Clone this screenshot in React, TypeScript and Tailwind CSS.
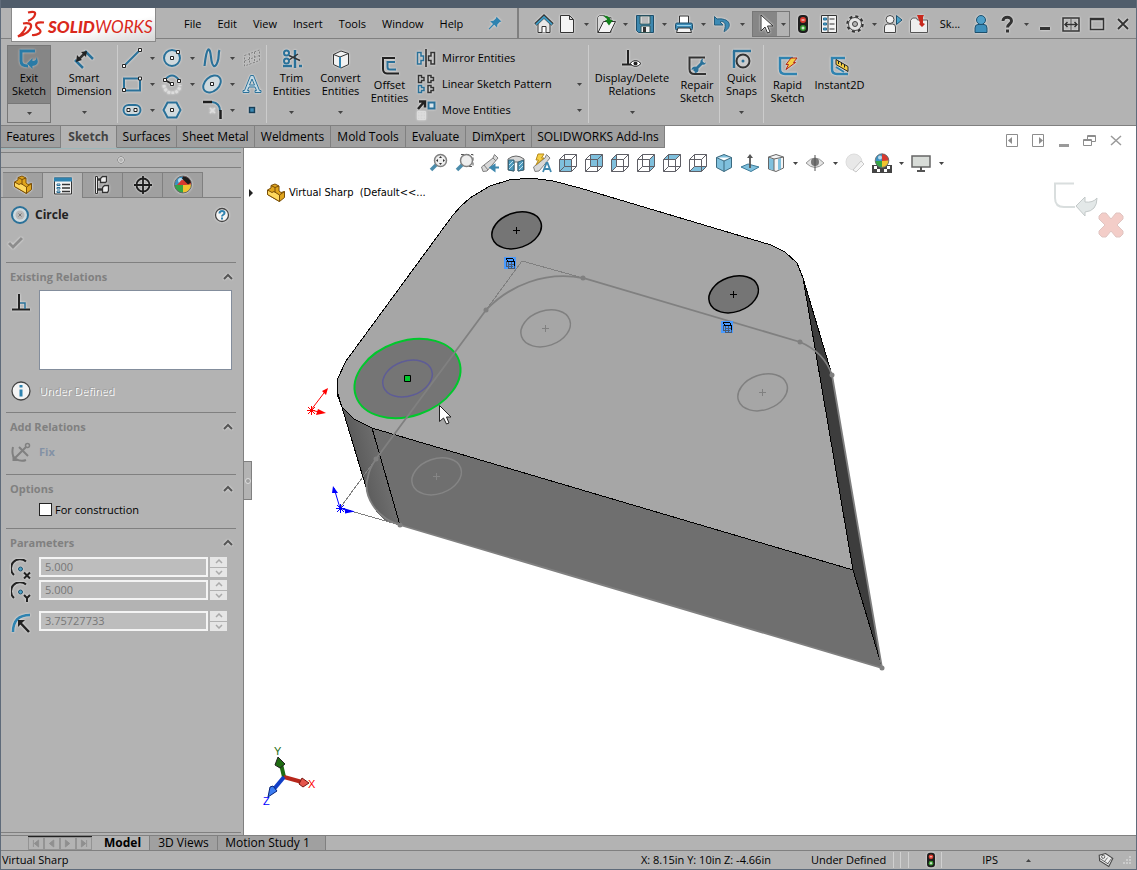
import React, { useState } from "react";
import clsx from "clsx";

const BLUE = "#2a7199";
const DARK = "#333333";

const cube = (face: string) => (
  <>
    <path d={face} fill="#7fc0dd" stroke="none" />
    <path d="M1.5 6.5h12v12h-12zM6.5 1.5h12v12h-12zM1.5 6.5l5-5M13.5 6.5l5-5M13.5 18.5l5-5M1.5 18.5l5-5" stroke="#5f5f66" />
  </>
);

const part = (
  <g stroke="#7a4f08" strokeWidth="1" strokeLinejoin="round">
    <path d="M1.500 7L5 5V2.500L9 1l4 2v5l2 1.500 3.500-1v6l-5 4-12-7z" fill="#e0a51c" />
    <path d="M1.500 7l4.500 2.500 2-1 5.500 3.500v6.500l-12-7z" fill="#ffd95e" />
    <path d="M5 2.500l4 2v5M9 4.500L13 3M13.500 12l5-3.500" fill="none" />
  </g>
);

const sphere = (
  <>
    <circle cx="10" cy="9.500" r="8.500" fill="#3b93c4" />
    <path d="M10 1a8.500 8.500 0 0 1 8.500 8.500L10 11z" fill="#d8392f" />
    <path d="M10 10l8.500-.5A8.500 8.500 0 0 1 10 18z" fill="#f0c430" />
    <path d="M1.500 10L10 10v8a8.500 8.500 0 0 1-8.500-8z" fill="#35a546" />
    <circle cx="7.500" cy="5.500" r="2.500" fill="#ffffff" opacity=".65" />
    <circle cx="10" cy="9.500" r="8.500" stroke="#666" />
  </>
);

const magnifier = (
  <>
    <path d="M8.500 11.500L3 17" stroke="#4c8cab" strokeWidth="3.500" />
    <circle cx="12.500" cy="7.500" r="6" fill="#eeeeee" stroke="#808080" strokeWidth="1.500" />
  </>
);

const icons: Record<string, React.ReactNode> = {
  home: (
    <>
      <path d="M4 9.500V18.500h12V9.500L10 4z" fill="#e8e8e8" stroke={DARK} />
      <path d="M1.500 10.500L10 2.500l8.500 8" stroke={DARK} strokeWidth="3.500" />
      <path d="M2 10.500L10 3l8 7.500" stroke="#3f9bc4" strokeWidth="1.800" />
      <path d="M8 18.500v-6h4v6" fill="#fff" stroke={DARK} />
    </>
  ),
  page: <path d="M3.500 1.500h9l4 4v13h-13zM12.500 1.500v4h4" fill="#f4f4f4" stroke={DARK} />,
  open: (
    <>
      <path d="M1.500 3.500l2-2h5l1 2H15v15H1.500z" fill="#d9d9d9" stroke="#666" />
      <path d="M2 18.500L7.500 7.500h12L14 18.500z" fill="#f4f4f4" stroke={DARK} />
      <path d="M7 2c4-1 7 1 7.500 4H17l-4 5.500L9 6h2c0-2-1.500-3-4-4z" fill="#12801a" />
    </>
  ),
  save: (
    <>
      <path d="M1.500 1.500h17v17h-15l-2-2z" fill="#3d87ae" stroke="#1d4f6c" />
      <path d="M5 2h10v8H5zM6 12h9v6.500H6z" fill="#efefef" stroke="#355" />
      <path d="M6.500 4h7M6.500 6h7M6.500 8h7" stroke="#888" />
      <path d="M8 13h3v5H8z" fill={DARK} />
    </>
  ),
  print: (
    <>
      <path d="M5.500 2h9v8h-9z" fill="#fff" stroke={DARK} />
      <rect x="1.500" y="9" width="17" height="7" rx="1.500" fill="#3d8bb5" stroke="#1d4f6c" />
      <path d="M4 14h12l1.500 4.500h-15z" fill="#f4f4f4" stroke={DARK} />
      <path d="M3 11.500h14" stroke="#9cd2ea" />
    </>
  ),
  undo: (
    <path d="M1.500 2.500v8.500h8.500L7 8c4-1.500 7 1.500 4 9.500 8-3 8-14-7-12.500z" fill="#3d8bb5" stroke="#245d7d" />
  ),
  select: <path d="M6 1v16l4-4 2.500 6 2.500-1-2.500-6H18z" fill="#fff" stroke={DARK} />,
  traffic: (
    <>
      <rect x="5" y="1" width="10" height="18" rx="4" fill="#1d1d1d" />
      <circle cx="10" cy="6" r="3" fill="#d93a2e" />
      <circle cx="10" cy="14" r="3" fill="#36962e" />
      <path d="M8.500 6h3M8.500 14h3M10 12.500v3" stroke="#fff" />
    </>
  ),
  options: (
    <>
      <path d="M2.500 1.500h15v17h-15z" fill="#f4f4f4" stroke={DARK} />
      <path d="M4.500 4h3v2h-3zM4.500 9h3v2h-3zM4.500 14h3v2h-3z" fill="#4da3c8" stroke={BLUE} />
      <path d="M10.500 5h5M10.500 10h5M10.500 15h5M9 2v16" stroke={DARK} />
    </>
  ),
  gear: (
    <>
      <circle cx="10" cy="10" r="7.500" stroke={DARK} strokeWidth="2.500" strokeDasharray="3 2.900" />
      <circle cx="10" cy="10" r="6.500" fill="#e6e6e6" stroke="#444" />
      <circle cx="10" cy="10" r="2.500" fill="#b3b3b3" stroke="#444" />
    </>
  ),
  share: (
    <>
      <path d="M1.500 18.500V13q0-3 3-3h5q3 0 3 3v5.500z" fill="#f2f2f2" stroke="#444" />
      <circle cx="7" cy="5.500" r="4" fill="#f2f2f2" stroke="#444" />
      <path d="M13.500 1.500v9l5.500-4.500z" fill="#4da3c8" stroke="#1d4f6c" />
    </>
  ),
  bag: (
    <>
      <path d="M1.500 6.500l2-2.500h4l1 2h10v12.500h-17z" fill="#eeeeee" stroke="#555" />
      <path d="M8 1h7l-1 2v6l2 1-3 3-3-3 1-1z" fill="#c8281c" />
    </>
  ),
  user: (
    <>
      <path d="M4 18.500V14q0-3.500 3-3.500h6q3 0 3 3.500v4.500z" fill="#3f8fba" stroke="#1d4f6c" />
      <circle cx="10" cy="6" r="4.500" fill="#4f9fc8" stroke="#1d4f6c" />
    </>
  ),
  help: <path d="M6 7c0-5 8.500-5 8.500 0 0 3-4 3-4 6.500M10.500 15.500v3" stroke={DARK} strokeWidth="3" />,
  minimize: <path d="M5 14.500h10" stroke={DARK} strokeWidth="3" />,
  span: (
    <>
      <path d="M2 4h16v13H2z" stroke={DARK} strokeWidth="1.500" />
      <path d="M10 4v13" stroke="#555" />
      <path d="M4 10.500h12M6.500 8L4 10.500 6.500 13M13.500 8l2.500 2.500-2.500 2.500" stroke={DARK} strokeWidth="1.500" />
    </>
  ),
  maximize: <path d="M3.500 4.500h13v11h-13zM3 5.500h14" stroke={DARK} strokeWidth="1.500" />,
  close: <path d="M5 5l10 10M15 5L5 15" stroke={DARK} strokeWidth="1.800" />,
  pin: <path d="M12 1l6 6-2 .5-3 3-.5 4-3.500-3.500L3 17l-1-1 5.500-6L4 6.500 8 6l3-3z" fill="#2f83b0" />,

  exit: (
    <>
      <path d="M16 2H2v10q0 5 7 5" stroke="#2a7ba6" strokeWidth="3" />
      <path d="M8 14.500L13.500 9v3q4 0 4-4 4 8-4 9v3z" fill="#2a7ba6" />
    </>
  ),
  dimension: (
    <>
      <path d="M1 11l8 8M11 2l8 8" stroke="#2a7199" strokeWidth="2.500" />
      <path d="M5 10l6-6" stroke={DARK} strokeWidth="2.500" />
      <path d="M2 13l1-7 5 5zM13 2L7 3l5 5z" fill="#222" />
    </>
  ),
  line: (
    <>
      <path d="M2 18L18 2" stroke={BLUE} strokeWidth="2" />
      <path d="M.5 16.500h3v3h-3zM16.500.5h3v3h-3z" fill="#fff" stroke="#222" />
    </>
  ),
  circle: (
    <>
      <circle cx="10" cy="10" r="8" fill="#d0dade" stroke={BLUE} strokeWidth="2" />
      <path d="M8.500 8.500h3v3h-3zM14.500 2.500h3v3h-3z" fill="#fff" stroke="#222" />
    </>
  ),
  spline: <path d="M2.500 18C5-4 8-1 9 9s4 12 6.500 5C17.500 9 16 5 17.500 2" stroke={BLUE} strokeWidth="2.200" />,
  plane: (
    <path d="M2.500 7.500L17.500 2v10.500L2.500 18zM2.500 13l15-5.500M7.500 5.500v11M12.500 4v11" stroke="#808080" strokeDasharray="2 1.500" />
  ),
  rect: (
    <>
      <path d="M2 4.500h16v12H2z" stroke={BLUE} strokeWidth="2" />
      <path d="M.5 14.500h3v3h-3zM16.500 3h3v3h-3z" fill="#fff" stroke="#222" />
    </>
  ),
  arc: (
    <>
      <path d="M3 6q7-9 14 0" stroke={BLUE} strokeWidth="2" />
      <path d="M3 6l7 4" stroke="#222" strokeWidth="2" />
      <path d="M2 11a8 8 0 0 0 16 0" stroke="#ddd" strokeWidth="3" strokeDasharray="2.500 1.500" />
      <path d="M1.500 4.500h3v3h-3zM15.500 5.500h3v3h-3zM8.500 8.500h3v3h-3z" fill="#fff" stroke="#222" />
    </>
  ),
  ellipse: (
    <>
      <ellipse cx="10" cy="10" rx="10" ry="7" transform="rotate(-42 10 10)" fill="#d0dade" stroke={BLUE} strokeWidth="2" />
      <path d="M8.500 8.500h3v3h-3z" fill="#fff" stroke="#222" />
    </>
  ),
  text: <path d="M1 18.500h6v-2H5.500L7 13h6l1.500 3.500H13v2h6v-2h-1.500L11.500 1.500h-3L2.500 16.500H1zM10 5l2.500 6h-5z" fill="#c5dae5" stroke={BLUE} />,
  slot: (
    <>
      <rect x="1.500" y="5" width="17" height="10" rx="5" fill="#d0dade" stroke={BLUE} strokeWidth="2" />
      <path d="M5 8.500h3v3H5zM12 8.500h3v3h-3z" fill="#fff" stroke="#222" />
    </>
  ),
  polygon: (
    <>
      <path d="M1.500 10L5.500 2.500h9l4 7.500-4 7.500h-9z" fill="#d0dade" stroke={BLUE} strokeWidth="2" />
      <path d="M8.500 8.500h3v3h-3z" fill="#fff" stroke="#222" />
    </>
  ),
  fillet: (
    <>
      <path d="M10 2q8 1 8 9" stroke={BLUE} strokeWidth="2" />
      <path d="M1 2h9M18.500 10v9" stroke="#1d1d1d" strokeWidth="2.500" />
      <path d="M8 8l5 5M13 8l-5 5" stroke="#ddd" strokeWidth="1.500" />
    </>
  ),
  point: <path d="M7.500 7.500h5v5h-5z" fill="#3d8bb5" stroke="#173f58" strokeWidth="1.500" />,
  trim: (
    <>
      <path d="M13 1v18" stroke={BLUE} strokeWidth="2.500" />
      <path d="M1 17h9M17 17h3" stroke={BLUE} strokeWidth="2.500" />
      <path d="M7 6.500l11 5M7 11l9-6" stroke={DARK} strokeWidth="1.500" />
      <circle cx="4.500" cy="4" r="2.500" stroke={BLUE} strokeWidth="2" />
      <circle cx="4.500" cy="12" r="2.500" stroke={BLUE} strokeWidth="2" />
    </>
  ),
  convert: (
    <>
      <path d="M2.500 5.500L10 2l7.500 2.500v11L10 19l-7.500-3.500z" fill="#f2f2f2" stroke={DARK} />
      <path d="M2.500 5.500L9 8l8.500-3.500" stroke={DARK} />
      <path d="M9 8v11" stroke="#2f83b0" strokeWidth="2" />
    </>
  ),
  offset: (
    <>
      <path d="M15 2H3v11q0 4 4 4.500h12" stroke="#222" strokeWidth="2" />
      <path d="M15 6H7.500v5q0 2.500 2.500 2.500h6" stroke={BLUE} strokeWidth="2" />
    </>
  ),
  mirror: (
    <>
      <path d="M10 1v18" stroke="#222" strokeWidth="1.500" />
      <path d="M1.500 4.500H5V8h2.500v4.500H5V16H1.500z" stroke={BLUE} strokeWidth="1.500" />
      <path d="M18.500 4.500H15V8h-2.500v4.500H15V16h3.500z" stroke={DARK} strokeWidth="1.500" />
    </>
  ),
  pattern: (
    <>
      <path d="M2.500 1.500h3v2h2.500v3H5.500v2h-3zM12 1.500h3v2h2.500v3H15v2h-3zM12 11.500h3v2h2.500v3H15v2h-3z" stroke={DARK} strokeWidth="1.500" />
      <path d="M2.500 11.500h3v2h2.500v3H5.500v2h-3z" stroke={BLUE} strokeWidth="1.500" />
    </>
  ),
  move: (
    <>
      <path d="M2 9l6-7M3 1.500h6v6" stroke="#222" strokeWidth="2.500" />
      <path d="M12.500 2.500h6v6h-6z" stroke={BLUE} strokeWidth="2" fill="#d9e6ec" />
      <path d="M1.500 11.500h8v8h-8zM4 11.500v8M7 11.500v8M1.500 14h8M1.500 17h8" stroke="#ddd" />
    </>
  ),
  relations: (
    <>
      <path d="M6 1v14M0 15.500h11" stroke="#222" strokeWidth="2" />
      <path d="M8 14.500q5.500-6 11 0-5.500 6-11 0z" fill="#fff" stroke="#222" />
      <circle cx="13.500" cy="14.500" r="2" fill="#222" />
    </>
  ),
  repair: (
    <>
      <path d="M18 1.500H2.500V13q0 5 5 5H19" stroke={DARK} strokeWidth="2" />
      <path d="M7 15l9-9" stroke={BLUE} strokeWidth="3" />
      <path d="M8.500 10.500q-4 0-4 3.500l2.500-1 1.500 1.500-1 2.500q4.500 0 4-4zM14 8q-2-4 2-5.500l-.5 3L17 7l2-.5Q18 10 14 8z" fill={BLUE} />
    </>
  ),
  snaps: (
    <>
      <path d="M1 2h18M2 2v17" stroke={BLUE} strokeWidth="2.500" />
      <circle cx="11" cy="12" r="6.500" stroke="#333" strokeWidth="2" fill="#ccc" />
      <circle cx="11" cy="12" r="1.500" fill={BLUE} />
    </>
  ),
  rapid: (
    <>
      <path d="M15 2H2v11q0 5 5 5h12" stroke="#2f83b0" strokeWidth="2.500" />
      <path d="M13 2h6l-3.500 4.500h2L8 13.500l2.500-5H8z" fill="#f5cf45" stroke="#b2261b" />
    </>
  ),
  instant: (
    <>
      <path d="M15 2H2v11q0 5 5 5h11" stroke="#2f83b0" strokeWidth="2.500" />
      <path d="M6 3.500l12 7v5l-12-7z" fill="#f5cf45" stroke="#222" />
      <path d="M8.500 5v3M11.500 6.500v3M14.500 8.500v3" stroke="#222" />
      <path d="M6 11l8 5" stroke="#2f83b0" strokeWidth="2" />
    </>
  ),

  part,
  props: (
    <>
      <path d="M1.500 2h17v16h-17z" fill="#f4f4f4" stroke={DARK} />
      <path d="M1 1.500h18v4H1z" fill="#2f83b0" />
      <path d="M4 8h3v1.500H4zM4 11.500h3V13H4zM4 15h3v1.500H4z" stroke={BLUE} />
      <path d="M9 8.500h8M9 12h8M9 15.500h8" stroke={DARK} strokeWidth="1.500" />
    </>
  ),
  config: (
    <>
      <path d="M4 4.500h6M4 14.500h6" stroke={DARK} strokeWidth="2.500" />
      <path d="M2.500 1.500h2v17h-2z" fill="#eee" stroke={DARK} />
      <path d="M7.500 3.500l2-2h4v5l-1 1h-5zM9.500 12.500l2-2h4v5l-1 2h-5z" fill="#eee" stroke={DARK} strokeWidth="1.300" />
    </>
  ),
  target: (
    <>
      <circle cx="10" cy="10" r="6.500" stroke="#1d1d1d" strokeWidth="1.800" />
      <path d="M10 1v18M1 10h18" stroke="#1d1d1d" strokeWidth="1.800" />
    </>
  ),
  display: (
    <>
      {sphere}
      <path d="M10 1.500a8.500 8.500 0 0 1 8 6l-3 2-6-6z" fill="#1d1d1d" />
      <path d="M9 4.500l5 5L10 10H4z" fill="#d8392f" />
    </>
  ),
  circleHead: (
    <>
      <circle cx="10" cy="10" r="8" stroke={BLUE} strokeWidth="2" fill="#d0dade" />
      <circle cx="10" cy="10" r="4.500" fill="#b9b9b9" />
      <path d="M8.500 8.500l3 3M11.500 8.500l-3 3" stroke="#777" />
    </>
  ),
  question: (
    <>
      <circle cx="10" cy="10" r="6.500" fill="#f4f4f4" stroke="#444" strokeWidth="1.300" />
      <path d="M7.500 8.500c0-3.500 5-3 5-.5 0 2-2.500 1.500-2.500 3.500M10 12.500v2" stroke="#2f83b0" strokeWidth="2" />
    </>
  ),
  check: <path d="M3 11l4 4L16 6" stroke="#8d8d8d" strokeWidth="3" />,
  perp: (
    <>
      <path d="M8 2v15M1 17.500h18" stroke="#222" strokeWidth="2" />
      <path d="M9 11h5v6" stroke={BLUE} strokeWidth="1.500" />
    </>
  ),
  info: (
    <>
      <circle cx="10" cy="10" r="9" fill="#f4f4f4" stroke="#444" strokeWidth="1.300" />
      <path d="M10 8.500v7M10 4v2.500" stroke="#2f83b0" strokeWidth="3" />
    </>
  ),
  fix: (
    <>
      <path d="M2 5q-2 9 3 12t10 1M3 17L15 5M8 5l9 9" stroke="#808080" strokeWidth="2" />
      <path d="M1.500 13v6h6z" fill="#808080" />
      <circle cx="16.500" cy="3.500" r="2" stroke="#808080" strokeWidth="1.500" />
    </>
  ),
  centerX: (
    <>
      <path d="M3 16A8.500 8.500 0 0 1 15 2.500" stroke="#222" strokeWidth="2" />
      <circle cx="9.500" cy="10" r="2" fill="#4da3c8" stroke="#1d4f6c" />
      <path d="M13 13.500l6 6M19 13.500l-6 6" stroke="#222" strokeWidth="2" />
    </>
  ),
  centerY: (
    <>
      <path d="M3 16A8.500 8.500 0 0 1 15 2.500" stroke="#222" strokeWidth="2" />
      <circle cx="9.500" cy="10" r="2" fill="#4da3c8" stroke="#1d4f6c" />
      <path d="M13 13l3 3 3-3M16 16v4" stroke="#222" strokeWidth="2" />
    </>
  ),
  radius: (
    <>
      <path d="M2 19Q2 2 19 2" stroke="#2f83b0" strokeWidth="2.500" />
      <path d="M18 19L9 9.500" stroke="#222" strokeWidth="2.500" />
      <path d="M7 7h7l-7 7z" fill="#222" />
    </>
  ),

  zoomFit: (
    <>
      {magnifier}
      <path d="M12.500 3l1.500 2h-3zM12.500 12l1.500-2h-3zM8 7.500l2-1.500v3zM17 7.500L15 6v3z" fill="#333" />
    </>
  ),
  zoomArea: (
    <>
      <path d="M7 1.500h12v12h-4" stroke="#555" strokeDasharray="3 2" />
      {magnifier}
    </>
  ),
  previous: (
    <>
      <path d="M1.500 14L13 5l1.500-3.500L18 5l-2.500 3L7 18l-4 .5z" fill="#d8d8d8" stroke="#808080" />
      <path d="M13 5l3 3M4 12l4 5" stroke="#808080" />
      <path d="M19 14.500h-5M14.500 12L10.500 14.500l4 3z" stroke="#3d87ae" strokeWidth="2" fill="#3d87ae" />
    </>
  ),
  section: (
    <>
      <path d="M2 6q8-6 16 0v11l-6 1v-9H8v9l-6-1z" fill="#d8d8d8" stroke="#666" />
      <path d="M2.500 7H8v11l-5.500-1zM12 9l5.500-2v10L12 18z" fill="#4d9abd" stroke="#396478" />
      <path d="M3 12l4-4M3 16l5-5M13 13l4-4M13 17l4-4" stroke="#bfe0ee" />
    </>
  ),
  dynamic: (
    <>
      <path d="M1.500 14L13 5l1.500-3.500L18 5l-2.500 3L7 18l-4 .5z" fill="#d8d8d8" stroke="#808080" />
      <path d="M6 1h6L9.500 5H12l-8 7 2.500-5H4z" fill="#f5cf45" stroke="#b5891b" />
      <path d="M11 19l3.500-9h1L19 19M12.500 16h5" stroke="#3d87ae" strokeWidth="1.800" />
    </>
  ),
  front: cube("M1.500 6.500h12v12h-12z"),
  back: cube("M6.500 1.500h12v12h-12z"),
  left: cube("M1.500 6.500l5-5v12l-5 5z"),
  right: cube("M13.500 6.500l5-5v12l-5 5z"),
  top: cube("M1.500 6.500l5-5h12l-5 5z"),
  bottom: cube("M1.500 18.500l5-5h12l-5 5z"),
  iso: (
    <path d="M10 1.500l7.500 3v10L10 18.500l-7.500-4v-10zM2.500 4.500L10 8l7.500-3.500M10 8v10.500" fill="#7fc0dd" stroke="#3b6a80" />
  ),
  normal: (
    <>
      <path d="M1 14l7-3 11 3-8 4.500z" fill="#7fc0dd" stroke="#3b7a99" />
      <path d="M10 15V3" stroke="#555" strokeWidth="1.800" />
      <path d="M7 5l3-4 3 4z" fill="#555" />
    </>
  ),
  orient: (
    <>
      <path d="M2.500 4L10 1.500 17.500 4v11L10 18.500 2.500 16z" fill="#f4f4f4" stroke="#666" />
      <path d="M3 5l5 1.500v11L3 16zM12 6l3-1v11l-3 1z" fill="#7fc0dd" />
      <path d="M2.500 4L8 6l9.500-2M8 6v12" stroke="#666" />
    </>
  ),
  eye: (
    <>
      <path d="M1 10q9-10 18 0-9 9-18 0z" fill="#e4e4e4" stroke="#999" />
      <circle cx="10" cy="9" r="4" fill="#777" />
      <path d="M10 2v16" stroke="#555" />
    </>
  ),
  editLook: (
    <>
      <circle cx="9" cy="9" r="8" fill="#e8e8e8" stroke="#dddddd" />
      <path d="M8 17l8-9 3 3-8 8z" fill="#f4f4f4" stroke="#c8c8c8" />
    </>
  ),
  scene: (
    <>
      <path d="M0 12h20v8H0z" fill="#444" />
      <path d="M2 13h3v3H2zM15 13h3v3h-3zM5 16h3v3H5zM12 16h3v3h-3z" fill="#fff" />
      <g transform="translate(2 0) scale(.8)">{sphere}</g>
    </>
  ),
  monitor: (
    <>
      <path d="M1 3h18v11H1z" fill="#d8dcd8" stroke="#666" strokeWidth="1.500" />
      <path d="M10 14v4M6 18h8" stroke="#555" strokeWidth="2" />
    </>
  ),
  paneLeft: (
    <>
      <path d="M4.500 4.500h11v12h-11z" stroke="#8d8d8d" />
      <path d="M10 7v7l-4-3.500z" fill="#8d8d8d" />
    </>
  ),
  paneRight: (
    <>
      <path d="M4.500 4.500h11v12h-11z" stroke="#8d8d8d" />
      <path d="M11 7v7l4-3.500z" fill="#8d8d8d" />
    </>
  ),
  docMin: <path d="M5 15.500h10" stroke="#9a9a9a" strokeWidth="3" />,
  restore: <path d="M3.500 9.500h8v6h-8zM7.500 9V5.500h8v6H12M3.500 10.500h8M7.500 6.500h8" stroke="#8d8d8d" />,
  docClose: <path d="M5 6l10 9M15 6L5 15" stroke="#9a9a9a" strokeWidth="1.500" />,
  tag: (
    <>
      <path d="M1.500 4l8-2 9 6-5 10L2 11z" fill="#eee" stroke="#444" strokeWidth="1.300" />
      <circle cx="6.500" cy="6" r="2" stroke="#444" />
      <path d="M8 12l4-5M12 15l5-7M2 8l11 7" stroke="#444" />
    </>
  ),
};

function Icon({ name, className = "size-5" }: { name: string; className?: string }) {
  return (
    <svg viewBox="0 0 20 20" fill="none" aria-hidden="true" className={clsx("shrink-0", className)}>
      {icons[name]}
    </svg>
  );
}

function Caret({ className = "" }: { className?: string }) {
  return (
    <svg width="5" height="3" viewBox="0 0 5 3" aria-hidden="true" className={className}>
      <path d="M0 0h5L2.500 3z" fill="#444" />
    </svg>
  );
}

interface IToolProps {
  icon: string;
  label: string;
  className?: string;
  halo?: boolean;
}

function Tool({ icon, label, className = "w-[26px]", halo = true }: IToolProps) {
  return (
    <button type="button" aria-label={label} className={clsx("flex h-6 shrink-0 items-center justify-center", className)}>
      <Icon name={icon} className={clsx("size-5", halo && "drop-shadow-[0_0_1px_#eeeeee]")} />
    </button>
  );
}

function Drop({ label, className = "w-3" }: { label: string; className?: string }) {
  return (
    <button type="button" aria-label={label} className={clsx("flex h-6 shrink-0 items-center justify-center", className)}>
      <Caret />
    </button>
  );
}

function Logo() {
  return (
    <div className="relative z-10 ml-[10px] flex h-[34px] w-[145px] shrink-0 items-center border border-t-0 border-[#8a8a8a] bg-linear-to-br from-white from-60% to-[#d5d5d5] pl-1 text-[#da291c]">
      <svg width="32" height="30" viewBox="0 0 32 30" fill="none" stroke="currentColor" strokeWidth="2.200" className="shrink-0" aria-hidden="true">
        <path d="M12 2.500q8-2 7 2-1 4-7 6.500" />
        <path d="M7 13.500q9-1.500 8 3.500-1 6-13 9.500 6-4 8-10" />
        <path d="M28 12.500q-8-1-8 2.500 0 2 3 4 3 2.500 0 4.500-3 2-7 1.500" />
      </svg>
      <span className="mt-1 text-[17px] leading-5 italic [font-family:Lato,sans-serif]">
        <b className="font-black">SOLID</b>
        <span>WORKS</span>
      </span>
    </div>
  );
}

const menus = ["File", "Edit", "View", "Insert", "Tools", "Window", "Help"];
const fileTools = [
  ["page", "New"],
  ["open", "Open"],
  ["save", "Save"],
  ["print", "Print"],
  ["undo", "Undo"],
];

function MenuBar() {
  return (
    <header className="flex h-[31px] items-start border-b border-[#808080]">
      <Logo />
      <nav className="ml-7 flex h-[30px] items-center gap-4 pt-[2px]">
        {menus.map((m) => (
          <button type="button" key={m}>
            {m}
          </button>
        ))}
      </nav>
      <button type="button" aria-label="Pin" className="ml-6 flex h-[30px] items-center pt-[2px]">
        <Icon name="pin" className="size-4 drop-shadow-[0_0_1px_#eeeeee]" />
      </button>
      <div className="ml-auto flex h-[30px] items-center border-l-2 border-[#808080] pt-[2px] pl-3">
        <Tool icon="home" label="Home" />
        {fileTools.map(([icon, label]) => (
          <React.Fragment key={icon}>
            <Tool icon={icon} label={label} className="w-5" />
            <Drop label={`${label} options`} className="w-[19px]" />
          </React.Fragment>
        ))}
        <div className="flex border border-[#777777]">
          <Tool icon="select" label="Select" className="w-6 bg-[#868686]" />
          <Drop label="Select options" />
        </div>
        <Tool icon="traffic" label="Rebuild" />
        <Tool icon="options" label="File properties" />
        <Tool icon="gear" label="Options" />
        <Drop label="More options" />
        <Tool icon="share" label="Share" />
        <Tool icon="bag" label="Collection" />
        <span className="w-9 text-center">Sk...</span>
        <Tool icon="user" label="Account" />
        <Tool icon="help" label="Help" />
        <Drop label="Help options" />
        <Tool icon="minimize" label="Minimize" />
        <Tool icon="span" label="Span displays" />
        <Tool icon="maximize" label="Maximize" />
        <Tool icon="close" label="Close" />
      </div>
    </header>
  );
}

interface ICommandProps {
  icon: string;
  label: string;
  drop?: boolean;
  className: string;
}

function Command({ icon, label, drop, className }: ICommandProps) {
  return (
    <button type="button" className={clsx("flex h-[78px] shrink-0 flex-col items-center leading-[13px]", drop ? "pt-1" : "pt-[11px]", className)}>
      <Icon name={icon} className="mb-[2px] size-5 drop-shadow-[0_0_1px_#eeeeee]" />
      <span className="whitespace-pre-line">{label}</span>
      {drop && <Caret className="mt-auto mb-[9px]" />}
    </button>
  );
}

const Divider = () => <div className="h-[78px] w-px shrink-0 bg-[#cccccc]" />;

const sketchTools = [
  ["line", "Line", true],
  ["circle", "Circle", true],
  ["spline", "Spline", true],
  ["plane", "Plane", false],
  ["rect", "Rectangle", true],
  ["arc", "Arc", true],
  ["ellipse", "Ellipse", true],
  ["text", "Text", false],
  ["slot", "Slot", true],
  ["polygon", "Polygon", false],
  ["fillet", "Fillet", true],
  ["point", "Point", false],
] as const;

function Ribbon() {
  return (
    <div className="flex h-[87px] items-start border-b border-[#808080] pt-[6px] pl-[6px]">
      <button type="button" className="flex h-[78px] w-11 shrink-0 flex-col items-center border border-[#777777] leading-[13px]">
        <span className="flex h-[58px] w-full flex-col items-center border-b border-[#777777] bg-[#868686] pt-[3px]">
          <Icon name="exit" className="mb-[2px] size-5 drop-shadow-[0_0_1px_#cccccc]" />
          <span className="whitespace-pre-line">{"Exit\nSketch"}</span>
        </span>
        <Caret className="mt-2" />
      </button>
      <Command icon="dimension" label={"Smart\nDimension"} drop className="w-[66px]" />
      <Divider />
      <div className="grid shrink-0 grid-cols-[40px_40px_40px_24px] gap-y-[2px] pt-px pl-1">
        {sketchTools.map(([icon, label, drop]) => (
          <div key={icon} className="flex">
            <Tool icon={icon} label={label} className="w-5" />
            {drop && <Drop label={`${label} options`} className="w-5" />}
          </div>
        ))}
      </div>
      <Divider />
      <Command icon="trim" label={"Trim\nEntities"} drop className="w-[49px]" />
      <Command icon="convert" label={"Convert\nEntities"} drop className="w-[49px]" />
      <Command icon="offset" label={"Offset\nEntities"} className="w-[49px]" />
      <div className="flex w-[174px] shrink-0 flex-col gap-[2px] pt-px pr-[3px] pl-[2px]">
        {[
          ["mirror", "Mirror Entities"],
          ["pattern", "Linear Sketch Pattern"],
          ["move", "Move Entities"],
        ].map(([icon, label]) => (
          <div key={icon} className="flex h-6 items-center">
            <button type="button" className="flex items-center gap-[6px] whitespace-nowrap">
              <Icon name={icon} className="size-5 drop-shadow-[0_0_1px_#eeeeee]" />
              {label}
            </button>
            {icon !== "mirror" && (
              <span className="ml-auto">
                <Drop label={`${label} options`} />
              </span>
            )}
          </div>
        ))}
      </div>
      <Divider />
      <Command icon="relations" label={"Display/Delete\nRelations"} drop className="w-[86px]" />
      <Command icon="repair" label={"Repair\nSketch"} className="w-11" />
      <Divider />
      <Command icon="snaps" label={"Quick\nSnaps"} drop className="w-[43px]" />
      <Divider />
      <Command icon="rapid" label={"Rapid\nSketch"} className="w-[47px]" />
      <Command icon="instant" label="Instant2D" className="w-[57px]" />
    </div>
  );
}

const tabs = [
  { label: "Features", width: "w-[60px]" },
  { label: "Sketch", width: "w-[56px]" },
  { label: "Surfaces", width: "w-[60px]" },
  { label: "Sheet Metal", width: "w-[78px]" },
  { label: "Weldments", width: "w-[76px]" },
  { label: "Mold Tools", width: "w-[75px]" },
  { label: "Evaluate", width: "w-[60px]" },
  { label: "DimXpert", width: "w-[66px]" },
  { label: "SOLIDWORKS Add-Ins", width: "w-[133px]" },
];

function TabBar() {
  const [active, setActive] = useState("Sketch");
  return (
    <div className="flex h-[22px] bg-white text-xs">
      {tabs.map((t) => (
        <button
          type="button"
          key={t.label}
          onClick={() => setActive(t.label)}
          className={clsx(
            "shrink-0 border-r border-b border-r-[#808080] whitespace-nowrap",
            t.width,
            active === t.label ? "border-b-[#b3b3b3] bg-[#b3b3b3] font-bold text-[#444444]" : "border-b-[#808080] bg-[#a0a0a0]"
          )}
        >
          {t.label}
        </button>
      ))}
      <div className="ml-auto flex items-start pt-[2px] pr-[7px]">
        {["paneLeft", "paneRight", "docMin", "restore", "docClose"].map((n) => (
          <Tool key={n} icon={n} label={n} halo={false} />
        ))}
      </div>
    </div>
  );
}

function Section({ title, children }: { title: string; children: React.ReactNode }) {
  return (
    <section className="mr-[7px] ml-[5px] border-t border-[#808080]">
      <button type="button" className="flex h-[27px] w-full items-center justify-between pr-[3px] pl-1 font-bold text-[#808080]">
        {title}
        <svg width="10" height="7" viewBox="0 0 10 7" fill="none" aria-hidden="true" className="drop-shadow-[0_0_1px_#eeeeee]">
          <path d="M1 6l4-4 4 4" stroke="#555" strokeWidth="2" />
        </svg>
      </button>
      {children}
    </section>
  );
}

function Spinner({ icon, label, value }: { icon: string; label: string; value: string }) {
  const id = `param-${icon}`;
  return (
    <div className="flex h-5 items-center pl-[5px]">
      <label htmlFor={id} aria-label={label} className="mt-1 mr-2">
        <Icon name={icon} className="size-5 drop-shadow-[0_0_1px_#eeeeee]" />
      </label>
      <input id={id} defaultValue={value} className="h-5 min-w-0 flex-1 border-2 border-[#f4f4f4] bg-[#bdbdbd] pb-[2px] pl-1 text-[#777777]" />
      <div className="mr-[9px] ml-[2px] flex h-5 w-[17px] flex-col gap-px">
        {["M1 4l3-3 3 3", "M1 1l3 3 3-3"].map((d, i) => (
          <button type="button" key={d} aria-label={i ? `Decrease ${label}` : `Increase ${label}`} className="flex flex-1 items-center justify-center bg-[#e6e6e6]">
            <svg width="8" height="5" viewBox="0 0 8 5" fill="none" aria-hidden="true">
              <path d={d} stroke="#aaa" strokeWidth="1.500" />
            </svg>
          </button>
        ))}
      </div>
    </div>
  );
}

function PropertyPanel() {
  const [construction, setConstruction] = useState(false);
  return (
    <aside className="flex w-[243px] shrink-0 flex-col border-r border-[#808080]">
      <div className="mr-[2px] border-t border-t-[#9db7ba] pt-[3px]">
        <div className="flex h-4 items-center justify-center border-y border-[#808080]">
          <span className="size-2 rounded-full border-2 border-[#dddddd] outline outline-[#888888] -outline-offset-1" />
        </div>
      </div>
      <div className="mr-[2px] flex h-[30px] items-end border-b border-[#808080] pl-[2px]">
        {["part", "props", "config", "target", "display"].map((n) => (
          <button
            type="button"
            key={n}
            aria-label={n}
            className={clsx(
              "flex h-[25px] w-10 items-center justify-center border-t border-r border-[#808080]",
              n === "props" ? "-mb-px h-[26px] bg-[#b3b3b3]" : "bg-[#a0a0a0]"
            )}
          >
            <Icon name={n} className="size-5 drop-shadow-[0_0_1px_#eeeeee]" />
          </button>
        ))}
      </div>
      <div className="flex h-[34px] items-center pr-[11px] pl-[9px]">
        <Icon name="circleHead" className="size-5" />
        <h2 className="ml-[5px] text-xs font-bold text-[#222222]">Circle</h2>
        <span className="ml-auto">
          <Tool icon="question" label="Help" className="w-5" />
        </span>
      </div>
      <div className="h-[30px] pl-[5px]">
        <button type="button" aria-label="OK" className="flex">
          <Icon name="check" className="size-5 drop-shadow-[0_0_1px_#eeeeee]" />
        </button>
      </div>
      <Section title="Existing Relations">
        <div className="flex h-20 items-start pl-[5px]">
          <Icon name="perp" className="mt-[2px] mr-2 size-5 drop-shadow-[0_0_1px_#eeeeee]" />
          <div className="mr-1 h-20 flex-1 border border-[#838d9c] bg-white" />
        </div>
        <div className="flex h-[42px] items-center pl-[5px]">
          <Icon name="info" className="mr-2 size-5" />
          <span className="text-[#a0a0a0] [text-shadow:1px_1px_0_#ffffff]">Under Defined</span>
        </div>
      </Section>
      <Section title="Add Relations">
        <button type="button" className="flex h-[34px] items-start pl-[5px] font-bold text-[#8391a5]">
          <Icon name="fix" className="mt-[2px] mr-2 size-5" />
          <span className="mt-1">Fix</span>
        </button>
      </Section>
      <Section title="Options">
        <div className="flex h-[26px] items-start pl-[33px]">
          <input
            id="construction"
            type="checkbox"
            checked={construction}
            onChange={(e) => setConstruction(e.target.checked)}
            className="mt-[1px] size-[13px] appearance-none border border-[#222222] bg-white checked:bg-[#2a7199]"
          />
          <label htmlFor="construction" className="ml-[3px]">
            For construction
          </label>
        </div>
      </Section>
      <Section title="Parameters">
        <div className="flex flex-col gap-[3px] pt-[1px]">
          <Spinner icon="centerX" label="center X" value="5.000" />
          <Spinner icon="centerY" label="center Y" value="5.000" />
          <div className="mt-2">
            <Spinner icon="radius" label="radius" value="3.75727733" />
          </div>
        </div>
      </Section>
      <div className="mt-auto mr-[2px] mb-[1px] h-[2px] border-t border-[#808080]" />
    </aside>
  );
}

function Hole({ x, y, tone }: { x: number; y: number; tone: string }) {
  return (
    <g fill="none" stroke={tone}>
      <ellipse cx={x + 0.5} cy={y + 0.5} rx="25.500" ry="17.500" transform={`rotate(-19 ${x} ${y})`} strokeWidth="1.500" fill={tone === "#000000" ? "#757575" : "none"} />
      <path d={`M${x - 3} ${y + 0.5}h7M${x + 0.5} ${y - 3}v7`} shapeRendering="crispEdges" />
    </g>
  );
}

function PlaneMark({ x, y }: { x: number; y: number }) {
  return (
    <g transform={`translate(${x} ${y})`} shapeRendering="crispEdges">
      <path d="M0 0h12v12H0z" fill="#4a9bff" />
      <path d="M2.500 3.500v6h6M4.500 5v6h6v-5M4.500 7.500h6M7.500 5v6" fill="none" stroke="#4a5a70" />
      <path d="M1.500 1.500h7l2 3v4M2 2l2 2.500h6" fill="none" stroke="#000" />
    </g>
  );
}

const nodes = [
  [486, 310],
  [583, 278],
  [800, 342],
  [832, 375],
  [376, 459],
  [400, 525],
  [882, 668],
];

// Model coordinates are window coordinates, shifted to the viewport's corner.
function Model() {
  return (
    <svg className="absolute inset-0 h-full w-full" fill="none" role="img" aria-label="Virtual Sharp">
      <defs>
        <linearGradient id="bend" x1="345" y1="470" x2="392" y2="458" gradientUnits="userSpaceOnUse">
          <stop offset="0" stopColor="#525252" />
          <stop offset="1" stopColor="#757575" />
        </linearGradient>
      </defs>
      <g transform="translate(-244 -148)">
        <g shapeRendering="crispEdges">
          <path d="M338 394L342 407 354 419 372 428 400 525 387 522 377 513 369 498 366 487z" fill="url(#bend)" />
          <path d="M372 428L853 570 882 668 400 525z" fill="#6f6f6f" />
          <path d="M803 278L832 375 882 667 853 570z" fill="#3d3d3d" />
          <path
            d="M337 394L338 378 346 361 453 215 461 206 470 198 490 186 509 180 531 178 553 181 580 188 771 245 785 252 797 263 803 278 853 570 372 428 354 419 342 407z"
            fill="#a6a6a6"
            stroke="#000"
          />
          <path d="M338 394L366 487M372 428L400 525M803 278L832 375M853 570L882 667" stroke="#000" />
        </g>
        <Hole x={516} y={230} tone="#000000" />
        <Hole x={733} y={294} tone="#000000" />
        <ellipse cx="407.500" cy="378.500" rx="54.500" ry="37.500" transform="rotate(-19 407.500 378.500)" fill="#757575" stroke="#00c82c" strokeWidth="2" />
        <ellipse cx="407.500" cy="378.500" rx="25.500" ry="17.500" transform="rotate(-19 407.500 378.500)" stroke="#5e5c96" strokeWidth="1.500" />
        <g stroke="#808080" shapeRendering="crispEdges">
          <path d="M486 310L522 261 583 278M376 459L340 508 400 525" />
        </g>
        <g stroke="#808080" strokeWidth="1.800">
          <path d="M376 459L486 310C510 285 545 271 583 278L800 342Q824 352 832 375L882 668 400 525C376 518 362 495 368 477Q369 469 376 459" />
        </g>
        {nodes.map(([x, y]) => (
          <circle key={x} cx={x} cy={y} r="2.500" fill="#808080" />
        ))}
        <Hole x={545} y={328} tone="#808080" />
        <Hole x={762} y={392} tone="#808080" />
        <Hole x={436} y={476} tone="#858585" />
        <path d="M404.500 375.500h6v6h-6z" fill="#00c82c" stroke="#000" />
        <PlaneMark x={504} y={257} />
        <PlaneMark x={721} y={321} />
        <g stroke="#ff0000" fill="#ff0000">
          <path d="M307 410.500h8M311.500 406v9M308 407l7 7M315 407l-7 7M311 410l16-21M311 410l8 2" />
          <path d="M328 388l-6 3 4 4zM326 413l-10 2 2-6z" stroke="none" />
        </g>
        <g stroke="#0000ff" fill="#0000ff">
          <path d="M336 508.500h9M340.500 504v9M337 505l7 7M344 505l-7 7M340 508l-6-20M340 508l8 3" />
          <path d="M333 486l-1 7h6zM355 511.500l-10 2v-5z" stroke="none" />
        </g>
        <path d="M439.500 405.500v16l4-3.500 3 6 2.500-1-2.500-6h4.500z" fill="#fff" stroke="#222" />

        <path d="M284 777l-3-13" stroke="#1f6c12" strokeWidth="4" />
        <path d="M278 757l-3 8 5 3 5-4z" fill="#1f6c12" stroke="#222" />
        <path d="M284 777l18 5" stroke="#b7271b" strokeWidth="4" />
        <path d="M309 783l-7-5-3 6 4 3z" fill="#e5564c" stroke="#7a1610" />
        <path d="M284 777l-10 12" stroke="#123fc8" strokeWidth="4" />
        <path d="M268 797l2-10 3-1 4 5z" fill="#3c7df2" stroke="#06227a" />
        <g fontSize="11" fontFamily="Liberation Sans, sans-serif">
          <text x="274" y="755" fill="#1f6c12">Y</text>
          <text x="308" y="788" fill="#ff0000">X</text>
          <text x="263" y="805" fill="#0000ff">Z</text>
        </g>

        <path d="M1074 183.500h-19V198q0 9 9 9h11" stroke="#d9dede" strokeWidth="2" />
        <path d="M1076 206l9-9v5q8 1 12-4 0 13-12 14v4z" fill="#e3e8e8" stroke="#c3c9c9" />
        <path d="M1099 216l3-3h4l5 6 5-6h4l3 3v3l-6 6 6 6v3l-3 3h-4l-5-6-5 6h-4l-3-3v-3l6-6-6-6z" fill="#f3cdc8" stroke="#e0c5c2" />
      </g>
    </svg>
  );
}

const views = [
  ["zoomFit", "Zoom to fit"],
  ["zoomArea", "Zoom to area"],
  ["previous", "Previous view"],
  ["section", "Section view"],
  ["dynamic", "Dynamic annotation views"],
  ["front", "Front"],
  ["back", "Back"],
  ["left", "Left"],
  ["right", "Right"],
  ["top", "Top"],
  ["bottom", "Bottom"],
  ["iso", "Isometric"],
  ["normal", "Normal to"],
  ["orient", "View orientation"],
];

function Viewport() {
  return (
    <main className="relative min-w-0 flex-1 overflow-hidden bg-white">
      <Model />
      <div className="relative flex h-[30px] items-center justify-center pr-2">
        {views.map(([icon, label]) => (
          <Tool key={icon} icon={icon} label={label} halo={false} />
        ))}
        <Drop label="View orientation options" />
        <Tool icon="eye" label="Hide/show items" halo={false} className="w-[28px]" />
        <Drop label="Hide/show options" />
        <Tool icon="editLook" label="Edit appearance" halo={false} className="w-[28px]" />
        <Tool icon="scene" label="Apply scene" halo={false} />
        <Drop label="Scene options" />
        <Tool icon="monitor" label="View settings" halo={false} className="w-[28px]" />
        <Drop label="View settings options" />
      </div>
      <button type="button" className="relative flex h-[30px] items-center pl-[5px]">
        <svg width="4" height="8" viewBox="0 0 4 8" aria-hidden="true">
          <path d="M0 0l4 4-4 4z" fill="#222" />
        </svg>
        <Icon name="part" className="mr-[3px] ml-[13px] size-5" />
        <span className="whitespace-pre [font-family:'DejaVu_Sans_Condensed','DejaVu_Sans',sans-serif]">Virtual Sharp  (Default&lt;&lt;...</span>
      </button>
      <button type="button" aria-label="Collapse panel" className="absolute top-[313px] left-0 flex h-[39px] w-2 items-center justify-center border border-l-0 border-[#808080] bg-[#b3b3b3]">
        <span className="size-[6px] shrink-0 rounded-full border border-[#dddddd] bg-[#a0a0a0]" />
      </button>
    </main>
  );
}

function StudyTabs() {
  return (
    <div className="flex h-4 border-y border-[#808080] text-xs">
      <div className="ml-[27px] flex w-16 border-t border-[#222222]">
        {["M5 3v8M11 3L6 7l5 4z", "M10 3L5 7l5 4z", "M5 3l5 4-5 4z", "M11 3v8M5 3l5 4-5 4z"].map((d, i) => (
          <button type="button" key={d} aria-label={["First", "Previous", "Next", "Last"][i]} className="flex w-4 items-center justify-center border border-[#949494]">
            <svg width="14" height="13" viewBox="0 0 16 14" aria-hidden="true">
              <path d={d} fill="#8f8f8f" stroke="#8f8f8f" />
            </svg>
          </button>
        ))}
      </div>
      <button type="button" className="w-[58px] border-r border-[#808080] pl-1 leading-3 font-bold">
        Model
      </button>
      <button type="button" className="w-[68px] border-r border-[#808080] bg-[#a0a0a0] leading-3">
        3D Views
      </button>
      <button type="button" className="w-[108px] border-r border-[#808080] bg-[#a0a0a0] pr-2 leading-3">
        Motion Study 1
      </button>
    </div>
  );
}

function StatusBar() {
  return (
    <footer className="flex h-[19px] items-center border-b border-[#5f6b7a] pl-px">
      <span>Virtual Sharp</span>
      <span className="ml-auto">X: 8.15in Y: 10in Z: -4.66in</span>
      <span className="ml-10">Under Defined</span>
      <div className="ml-[7px] flex h-4 items-center border-x border-[#d0d0d0] pl-[6px]">
        <span className="h-4 w-px bg-[#d0d0d0]" />
        <span className="ml-[7px] h-4 w-px bg-[#d0d0d0]" />
        <Icon name="traffic" className="mr-[2px] ml-[14px] size-4 drop-shadow-[0_0_1px_#eeeeee]" />
      </div>
      <button type="button" className="ml-10 flex items-center">
        IPS
        <Caret className="ml-[28px] rotate-180" />
      </button>
      <Icon name="tag" className="ml-[67px] size-4" />
      <svg width="10" height="10" viewBox="0 0 10 10" aria-hidden="true" className="mr-1 ml-2">
        <path d="M7 1h2v2H7zM7 4h2v2H7zM4 4h2v2H4zM7 7h2v2H7zM4 7h2v2H4zM1 7h2v2H1z" fill="#ccc" />
      </svg>
    </footer>
  );
}

function App() {
  return (
    <div className="flex min-h-screen flex-col border-r border-l border-[#5f6b7a] bg-[#b3b3b3] [font-family:'Open_Sans','Noto_Sans',sans-serif] text-[11px] leading-4 text-black">
      <div className="h-2 bg-[#505d6b]" />
      <MenuBar />
      <Ribbon />
      <TabBar />
      <div className="flex flex-1">
        <PropertyPanel />
        <Viewport />
      </div>
      <StudyTabs />
      <StatusBar />
    </div>
  );
}

export default App;
